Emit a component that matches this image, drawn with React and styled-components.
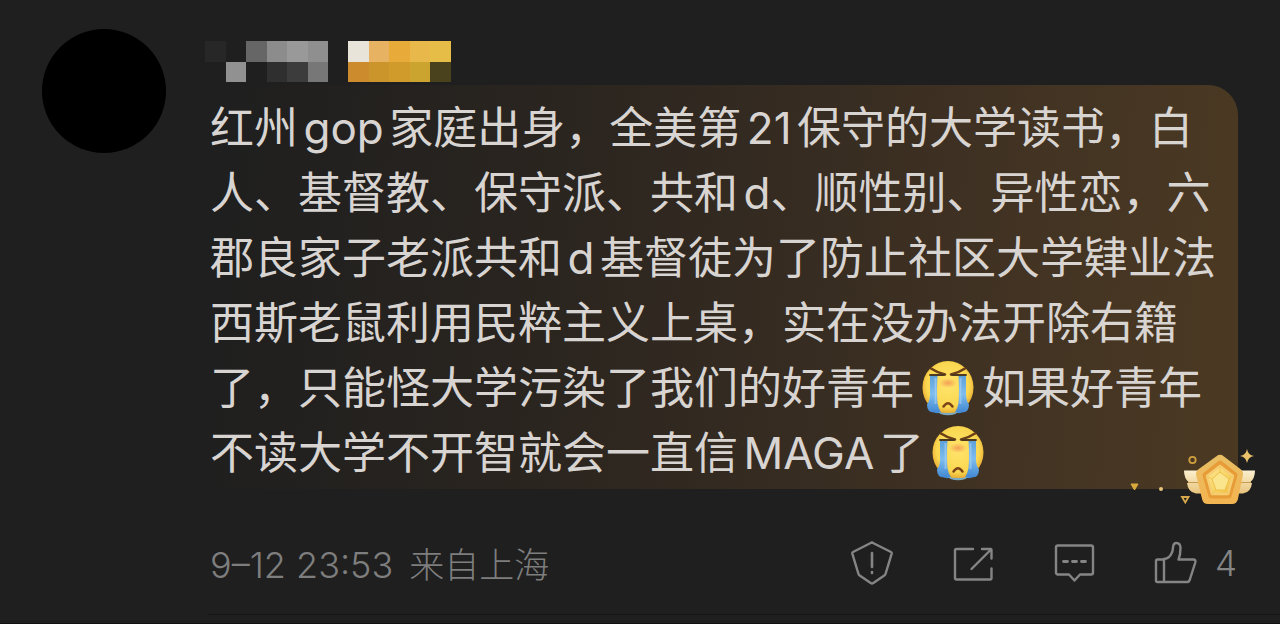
import React from 'react'
import styled, { createGlobalStyle } from 'styled-components'

const GlobalStyle = createGlobalStyle`
  * {
    box-sizing: border-box;
  }
  body {
    margin: 0;
    background: #1f1f1f;
    font-family: Inter, "Noto Sans CJK SC", sans-serif;
  }
`

const CommentWrap = styled.article`
  display: flex;
  gap: 42px;
  padding: 29px 0 0 42px;
  background: #1f1f1f;
  border-bottom: 1px solid #121012;
`
const Avatar = styled.div`
  flex: none;
  width: 124px;
  height: 124px;
  border-radius: 50%;
  background: #000;
`
const CommentBody = styled.div`
  flex: 1;
  min-width: 0;
  padding-top: 12px;
`
const NameRow = styled.header`
  display: flex;
  gap: 20px;
  height: 44px;
  margin-left: -3px;
`
const Bubble = styled.div`
  position: relative;
  margin-right: 42px;
  padding: 11px 10px 3px 2px;
  border-radius: 0 30px 0 0;
  background: linear-gradient(95deg, #1f1f1f 2%, #29241f 30%, #352b21 55%, #423323 78%, #4b3922 100%);
`
const CommentText = styled.p`
  margin: 0;
  color: #d8d4d1;
  font-size: 44px;
  line-height: 65px;
  text-autospace: normal;
`
const EmojiIcon = styled.svg`
  width: 56px;
  height: 56px;
  margin: 0 6px;
  vertical-align: -12px;
`
const MedalIcon = styled.svg`
  position: absolute;
  right: -20px;
  bottom: -17px;
  width: 132px;
  height: 60px;
`
const Footer = styled.footer`
  display: flex;
  align-items: center;
  justify-content: space-between;
  height: 126px;
  padding: 22px 43px 0 2px;
  border-bottom: 1px solid #151515;
  margin-bottom: 8px;
`
const Meta = styled.div`
  display: flex;
  align-items: baseline;
  gap: 16px;
  color: #7e7e7e;
  font-size: 36px;
  font-weight: 300;
`
const Place = styled.span`
  font-size: 35px;
`
const Actions = styled.div`
  display: flex;
  gap: 57px;
`
const ActionButton = styled.button`
  display: flex;
  align-items: center;
  gap: 18px;
  padding: 0;
  border: 0;
  background: none;
  color: #858585;
  font: 300 35px Inter, sans-serif;
  cursor: pointer;
`
const ActionIcon = styled.svg`
  width: 44px;
  height: 46px;
  fill: none;
  stroke: currentColor;
  stroke-width: 2.4;
  stroke-linecap: round;
  stroke-linejoin: round;
`

const nameCells = [
  ['#272727', '#1f1f1f', '#666', '#8c8c8c', '#999', '#8f8f8f'],
  ['#1f1f1f', '#919191', '#1f1f1f', '#2f2f2f', '#3c3c3c', '#777']
]
const badgeCells = [
  ['#e9e4d9', '#e7b363', '#e8aa38', '#e8b84b', '#e5bd47'],
  ['#cc8b2d', '#cc952b', '#d09b2a', '#cba32f', '#4a421d']
]

const Mosaic = ({ cells, width, label }) => (
  <svg
    width={width}
    height="41"
    viewBox={`0 0 ${cells[0].length} 2`}
    preserveAspectRatio="none"
    shapeRendering="crispEdges"
    role="img"
    aria-label={label}
  >
    {cells.map((row, y) =>
      row.map((color, x) => <rect key={`${x}-${y}`} x={x} y={y} width="1" height="1" fill={color} />)
    )}
  </svg>
)

const CryEmoji = () => (
  <EmojiIcon viewBox="0 0 56 56" role="img" aria-label="泪">
    <defs>
      <radialGradient id="face" cx="50%" cy="45%" r="56%">
        <stop offset="0" stopColor="#ffe46c" />
        <stop offset="0.75" stopColor="#fad750" />
        <stop offset="1" stopColor="#e6a52d" />
      </radialGradient>
      <linearGradient id="tear" x1="0" y1="0" x2="0" y2="1">
        <stop offset="0" stopColor="#5b9fd8" />
        <stop offset="0.5" stopColor="#7fbdee" />
        <stop offset="1" stopColor="#3f86d2" />
      </linearGradient>
      <radialGradient id="nose">
        <stop offset="0" stopColor="#f08f50" stopOpacity=".8" />
        <stop offset="1" stopColor="#f08f50" stopOpacity="0" />
      </radialGradient>
    </defs>
    <ellipse cx="28" cy="27.500" rx="25.500" ry="26.500" fill="url(#face)" />
    <ellipse cx="28" cy="23" rx="9" ry="5" fill="url(#nose)" />
    <path d="M10 15h7.500q-1 16 0 28 1 6 3.500 9.500-4 1.500-7 0-7 0-7-8 3-4 3-10z" fill="url(#tear)" />
    <path d="M46 15h-7.500q1 16 0 28-1 6-3.500 9.500 4 1.500 7 0 7 0 7-8-3-4-3-10z" fill="url(#tear)" />
    <path d="M15.500 18v26M40.500 18v26" stroke="#a8d4f5" strokeWidth="2" fill="none" opacity=".6" />
    <path d="M17.500 51.500q10.500 3 21 0l-3 2.500q-7.500 2.500-15 0z" fill="#7aa9c0" />
    <path d="M11 8.500q6 4 14 6M45 8.500q-6 4-14 6" stroke="#6b3f17" strokeWidth="2.600" strokeLinecap="round" fill="none" />
    <path d="M10 15h14M32 15h14" stroke="#4e3a20" strokeWidth="1.800" strokeLinecap="round" />
    <path d="M23.500 46.500q4.500-6.500 9 0" stroke="#7d4419" strokeWidth="2.500" strokeLinecap="round" fill="none" />
  </EmojiIcon>
)

const Medal = () => (
  <MedalIcon viewBox="0 0 132 60" aria-hidden="true">
    <defs>
      <linearGradient id="gold" x1="0" y1="0" x2="0" y2="1">
        <stop offset="0" stopColor="#e9bd62" />
        <stop offset="1" stopColor="#f3b552" />
      </linearGradient>
      <linearGradient id="wing" x1="0" y1="0" x2="0" y2="1">
        <stop offset="0" stopColor="#fbf0d0" />
        <stop offset="1" stopColor="#e8c47c" />
      </linearGradient>
      <linearGradient id="gem" x1="0" y1="0" x2="1" y2="1">
        <stop offset="0" stopColor="#fbe695" />
        <stop offset="0.55" stopColor="#f8d565" />
        <stop offset="1" stopColor="#f2bb3c" />
      </linearGradient>
    </defs>
    {/* wings */}
    <path d="M58 24.500h20v23H70q-8-1-9-10.500 1 0 2-.500-5-4-5-12z" fill="url(#wing)" />
    <path d="M129 24.500h-20v23h8q8-1 9-10.500-1 0-2-.500 5-4 5-12z" fill="url(#wing)" />
    <path d="M62 36.500h12M125 36.500h-12" stroke="#c99b4d" strokeWidth="1" />
    {/* body */}
    <path d="M94 15l17 13-5 24H82l-6-24z" fill="url(#gold)" stroke="url(#gold)" strokeWidth="12" strokeLinejoin="round" />
    <path d="M94 17l15 12-6 21H85l-6-21z" fill="#e79c37" stroke="#e79c37" strokeWidth="5" strokeLinejoin="round" />
    <path d="M94 20l13 10-5 18H86l-5-18z" fill="url(#gem)" stroke="#f6cd72" strokeWidth="2.500" strokeLinejoin="round" />
    <path d="M94 26l9 7-4 11H90l-4-11z" fill="#fbe58c" stroke="#eec04c" strokeWidth="1" />
    <path d="M94 20v6M81 30l5 3M86 48l4-4M102 48l-3-4M107 30l-4 3" stroke="#efc452" strokeWidth="1" />
    {/* sparks */}
    <circle cx="66.500" cy="14" r="3.200" fill="none" stroke="#d0a040" strokeWidth="1.800" />
    <path d="M121 3q1 6 7 7-6 1-7 7-1-6-7-7 6-1 7-7z" fill="#e9c16a" />
    <path d="M5 38h7l-3.500 6z" fill="#d9aa3b" stroke="#d9aa3b" />
    <circle cx="35" cy="43" r="2" fill="#e9c57c" />
    <path d="M56 51h6.500l-3.200 5.500z" fill="none" stroke="#d7a94c" strokeWidth="1.800" />
  </MedalIcon>
)

const App = () => (
  <>
    <GlobalStyle />
    <CommentWrap>
      <Avatar />
      <CommentBody>
        <NameRow>
          <Mosaic cells={nameCells} width="123" label="用户名" />
          <Mosaic cells={badgeCells} width="103" label="徽章" />
        </NameRow>
        <Bubble>
          <CommentText>
            红州gop家庭出身，全美第21保守的大学读书，白人、基督教、保守派、共和d、顺性别、异性恋，六郡良家子老派共和d基督徒为了防止社区大学肄业法西斯老鼠利用民粹主义上桌，实在没办法开除右籍了，只能怪大学污染了我们的好青年
            <CryEmoji />
            如果好青年不读大学不开智就会一直信MAGA了
            <CryEmoji />
          </CommentText>
          <Medal />
        </Bubble>
        <Footer>
          <Meta>
            <time>9–12 23:53</time>
            <Place>来自上海</Place>
          </Meta>
          <Actions>
            <ActionButton type="button" aria-label="举报">
              <ActionIcon viewBox="0 0 44 46">
                <path d="M22 2.500l19 9.500q1 .5.700 1.600l-6.200 20.400q-.3 1-1.200 1.600l-11 7.500q-1.300.9-2.600 0l-11-7.500q-.9-.6-1.200-1.600l-6.200-20.400q-.3-1.100.7-1.600l17.700-9q1.300-.9 2.600 0" />
                <path d="M22 13v14M22 32v1" strokeWidth="2.600" />
              </ActionIcon>
            </ActionButton>
            <ActionButton type="button" aria-label="转发">
              <ActionIcon viewBox="0 0 44 46">
                <path d="M22 9H5.500Q4 9 4 10.500v27.500Q4 39.500 5.500 39.500h33.500Q40.500 39.500 40.500 38V28.500M20.500 29L40 9.500M31 9h8.500q1 0 1 1v8.500" />
              </ActionIcon>
            </ActionButton>
            <ActionButton type="button" aria-label="评论">
              <ActionIcon viewBox="0 0 44 46">
                <path d="M6 5.500h33q2 0 2 2v25q0 2-2 2H28l-5.500 6-5.500-6H6q-2 0-2-2v-25q0-2 2-2z" />
                <path d="M11.500 21.500h4M20.500 21.500h4M29.500 21.500h4" strokeWidth="2.800" />
              </ActionIcon>
            </ActionButton>
            <ActionButton type="button" aria-label="赞 4">
              <ActionIcon viewBox="0 0 44 46">
                <path d="M11 19.500H4.500Q3 19.500 3 21v19.500Q3 42 4.500 42H34q2 0 2.700-2l5.600-17.500q.8-3-2-3H25.500q2-4.500 2-11.500 0-5-4-5-3.300 0-3.500 4.500-.3 6-4 9.500-2 1.800-5 2zM11 19.500V42" />
              </ActionIcon>
              4
            </ActionButton>
          </Actions>
        </Footer>
      </CommentBody>
    </CommentWrap>
  </>
)

export default App
